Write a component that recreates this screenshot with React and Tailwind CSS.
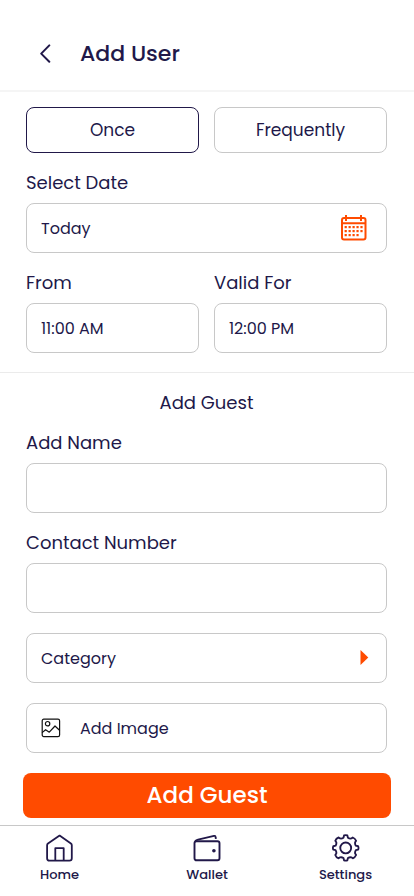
import React, { useState } from 'react';

const GEAR =
  'M12.3 1.2 Q14 0.5 15.7 1.2 L16.3 3.6 Q18 4.7 19.8 4.3 L21.3 3.3 Q23.6 4.1 24.7 6.7 L23.7 8.2 Q23.3 10 24.4 11.7 L26.8 12.3 Q27.5 14 26.8 15.7 L24.4 16.3 Q23.3 18 23.7 19.8 L24.7 21.3 Q23.6 23.9 21.3 24.7 L19.8 23.7 Q18 23.3 16.3 24.4 L15.7 26.8 Q14 27.5 12.3 26.8 L11.7 24.4 Q10 23.3 8.2 23.7 L6.7 24.7 Q4.1 23.9 3.3 21.3 L4.3 19.8 Q4.7 18 3.6 16.3 L1.2 15.7 Q0.5 14 1.2 12.3 L3.6 11.7 Q4.7 10 4.3 8.2 L3.3 6.7 Q4.1 4.1 6.7 3.3 L8.2 4.3 Q10 4.7 11.7 3.6 Z';

function BackIcon() {
  return (
    <svg width="12" height="20" viewBox="0 0 12 20" fill="none" stroke="#211849" strokeWidth="2" strokeLinecap="round" strokeLinejoin="round">
      <path d="M10.3 2.4 L2.2 10.6 L10.3 18.8" />
    </svg>
  );
}

function CalendarIcon() {
  const dots = [0, 1, 2].flatMap((row) =>
    [0, 1, 2, 3, 4].filter((col) => row < 2 || col < 4).map((col) => [3.6 + col * 3.95, 11 + row * 4])
  );
  return (
    <svg width="26" height="26" viewBox="0 0 26 26" fill="none" stroke="#ff4b00" strokeWidth="2">
      <rect x="1" y="3" width="23.5" height="21.5" rx="2" />
      <path d="M1 8.2h23.5M5 0v6M20 0v6" />
      {dots.map(([x, y]) => (
        <rect key={`${x}-${y}`} x={x} y={y} width="2.2" height="2.2" fill="#ff4b00" stroke="none" />
      ))}
    </svg>
  );
}

function ImageIcon() {
  return (
    <svg width="20" height="20" viewBox="0 0 20 20" fill="none" stroke="#111" strokeWidth="1.2" strokeLinecap="round" strokeLinejoin="round">
      <rect x="1.2" y="1.2" width="17.4" height="17.4" rx="1.6" />
      <circle cx="6.6" cy="5.7" r="2.2" />
      <path d="M1.4 14.4 L4.6 11.7 L8.3 14.2 L14 8 L18.5 12.2" />
    </svg>
  );
}

function HomeIcon() {
  return (
    <svg width="28" height="28" viewBox="0.5 0 28 28" fill="none" stroke="#211849" strokeWidth="1.8" strokeLinejoin="round">
      <path d="M1.6 11.2 Q1.6 10.2 2.5 9.5 L14.1 1.6 L25.4 9.5 Q26.3 10.2 26.3 11.2 V24.2 Q26.3 26.6 23.9 26.6 H4 Q1.6 26.6 1.6 24.2 Z" />
      <path d="M9.8 26.6 V14.2 H18.2 V26.6" />
    </svg>
  );
}

function WalletIcon() {
  return (
    <svg width="28" height="28" viewBox="0 0 28 28" fill="none" stroke="#211849" strokeWidth="1.9" strokeLinejoin="round">
      <rect x="1.5" y="7.3" width="25" height="19" rx="2" />
      <path d="M2.2 7.1 Q3.2 6 5 5.6 L21 1.9 Q22.4 1.6 22.6 3 L22.9 4.8" />
      <circle cx="20.9" cy="16.8" r="1.8" fill="#211849" stroke="none" />
    </svg>
  );
}

function SettingsIcon() {
  return (
    <svg width="28" height="28" viewBox="-0.1 -0.3 28.8 28.8" fill="none" stroke="#211849" strokeWidth="1.9" strokeLinejoin="round">
      <path d={GEAR} />
      <circle cx="14" cy="14" r="5.6" />
    </svg>
  );
}

const navItems = [
  { label: 'Home', icon: HomeIcon },
  { label: 'Wallet', icon: WalletIcon },
  { label: 'Settings', icon: SettingsIcon }
];

const label = 'block h-10 leading-10 text-[18px] whitespace-nowrap';
const field = 'w-full h-[50px] px-[14px] rounded-lg border border-[#c8c8c8] bg-white flex items-center text-[16px] text-left whitespace-nowrap';

export default function App() {
  const [mode, setMode] = useState('once');
  const [name, setName] = useState('');
  const [contact, setContact] = useState('');

  return (
    <div className="w-[414px] h-[896px] overflow-hidden bg-white text-[#211849] font-[Poppins,Inter,sans-serif]">
      <header className="h-[92px] border-b-2 border-[#f5f5f5] pt-4 pl-[39px] flex items-center">
        <button type="button" aria-label="Back">
          <BackIcon />
        </button>
        <h1 className="ml-[29px] text-[22px] font-medium">Add User</h1>
      </header>

      <main>
        <section className="pt-[15px] pl-[26px] pr-[27px] pb-[19px] border-b border-[#ebebeb]">
          <div className="grid grid-cols-2 gap-[15px] text-[17px]">
            <button
              type="button"
              onClick={() => setMode('once')}
              className={`h-[46px] pt-px rounded-lg border ${mode === 'once' ? 'border-[#211849]' : 'border-[#c8c8c8]'}`}
            >
              Once
            </button>
            <button
              type="button"
              onClick={() => setMode('frequently')}
              className={`h-[46px] pt-px rounded-lg border ${mode === 'frequently' ? 'border-[#211849]' : 'border-[#c8c8c8]'}`}
            >
              Frequently
            </button>
          </div>

          <div className="mt-[10px]">
            <span className={label}>Select Date</span>
            <button type="button" className={`${field} justify-between pr-[19px]`}>
              <span className="pt-0.5">Today</span>
              <CalendarIcon />
            </button>
          </div>

          <div className="mt-[10px] grid grid-cols-2 gap-[15px]">
            <div>
              <span className={label}>From</span>
              <button type="button" className={`${field} pt-0.5`}>11:00 AM</button>
            </div>
            <div>
              <span className={label}>Valid For</span>
              <button type="button" className={`${field} pt-0.5`}>12:00 PM</button>
            </div>
          </div>
        </section>

        <section className="pt-[10px] pl-[26px] pr-[27px]">
          <h2 className={`${label} text-center`}>Add Guest</h2>
          <label>
            <span className={label}>Add Name</span>
            <input className={field} value={name} onChange={(e) => setName(e.target.value)} />
          </label>
          <label className="block mt-[10px]">
            <span className={label}>Contact Number</span>
            <input className={field} value={contact} onChange={(e) => setContact(e.target.value)} />
          </label>
          <button type="button" className={`${field} mt-5 justify-between pr-[17px]`}>
            <span className="pt-0.5">Category</span>
            <svg className="mb-px" width="9" height="15" viewBox="0 0 9 15" fill="#ff4b00">
              <path d="M0.5 0 L8.3 7.5 L0.5 15 Z" />
            </svg>
          </button>
          <button type="button" className={`${field} mt-5`}>
            <ImageIcon />
            <span className="ml-[19px] pt-0.5">Add Image</span>
          </button>
        </section>

        <div className="mt-5 px-[23px]">
          <button type="button" className="w-full h-[45px] pb-px rounded-lg bg-[#ff4b00] text-white text-[23px] font-medium leading-none">
            Add Guest
          </button>
        </div>
      </main>

      <nav className="mt-[7px] h-[71px] border-t border-[#c8c8c8] pt-2 grid grid-cols-[119px_176px_101px] text-[13px] font-medium">
        {navItems.map((item) => (
          <button key={item.label} type="button" className="flex flex-col items-center justify-start">
            <item.icon />
            <span className="mt-1 leading-[18px]">{item.label}</span>
          </button>
        ))}
      </nav>
    </div>
  );
}
